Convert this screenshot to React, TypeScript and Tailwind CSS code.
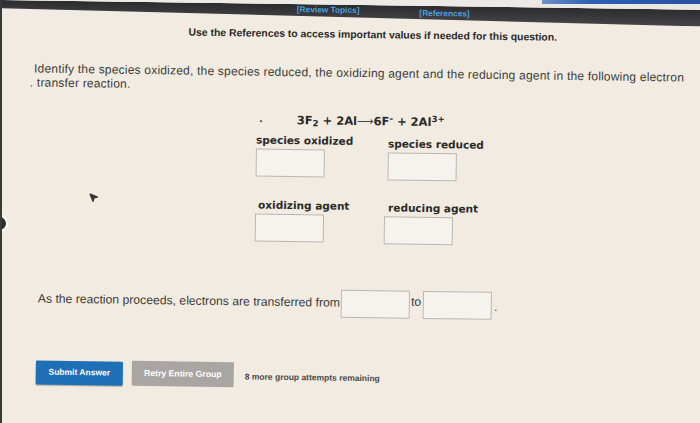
import { MousePointer2 } from 'lucide-react';

const verdana = "font-['DejaVu_Sans','Liberation_Sans',sans-serif]";
const arial = "font-['Liberation_Sans',Arial,sans-serif]";

const intro =
  'Identify the species oxidized, the species reduced, the oxidizing agent and the reducing agent in the following electron';

function AnswerBox({ className = '' }: { className?: string }) {
  return <div className={`h-[28px] w-[69px] border border-[#b9b6b1] bg-[#f6f3ee] ${className}`} />;
}

function Field({ label, className = '' }: { label: string; className?: string }) {
  return (
    <div className={`flex flex-col ${className}`}>
      <span className={`${verdana} text-[10.5px] font-bold leading-[13px] text-[#2b2a28]`}>{label}</span>
      <AnswerBox className="mt-[2px]" />
    </div>
  );
}

export default function App() {
  return (
    <div className="relative h-[423px] w-[700px] overflow-hidden border-l-2 border-[#3a3939] bg-[#f1ebe2] text-[#2f2e2c]">
      {/* strip of the browser chrome showing above the toolbar */}
      <div className="absolute inset-x-0 top-0 h-[12px] bg-[linear-gradient(90deg,#f0ebe4_0%,#ebe8e4_100%)]">
        <div className="ml-[540px] h-[4px] bg-[linear-gradient(90deg,#6f92c9,#2d5fb3_30%,#2653a6)]" />
      </div>

      {/* the photo is taken slightly tilted */}
      <div className="relative w-[712px] origin-top-left rotate-[0.8deg]">
        <div className="flex h-[17px] items-start bg-[linear-gradient(180deg,#2c2b2d,#454447)] pl-[295px] [clip-path:polygon(0_0,100%_0,100%_100%,0_48%)]">
          <span className={`${arial} text-[8.3px] font-bold leading-[10px] text-[#4aa3e0]`}>[Review Topics]</span>
          <span className={`${arial} ml-[60px] mt-[2px] text-[8.3px] font-bold leading-[10px] text-[#4aa3e0]`}>[References]</span>
        </div>

        <p className={`${arial} ml-[187px] mt-[7px] whitespace-nowrap text-[10.4px] font-bold leading-[12px] text-[#2b2a28]`}>
          Use the References to access important values if needed for this question.
        </p>

        <div className={`${arial} ml-[33px] mt-[25px] text-[12px] leading-[14px] tracking-[0.2px] text-[#3d3c39]`}>
          <p className="whitespace-nowrap">
            {intro.split(' ').map((word, i) => (
              <span key={i}>{word} </span>
            ))}
          </p>
          <p className="-ml-[4px] whitespace-nowrap">. transfer reaction.</p>
        </div>

        <div className="ml-[256px] mt-[20px]">
          <div className="flex items-end">
            <span className="mb-[1px] ml-[3px] text-[9px] leading-none text-[#55534f]">•</span>
            <span className={`${verdana} ml-[34px] text-[11.5px] font-bold leading-[14px] text-[#2b2a28]`}>
              3F<sub>2</sub> + 2Al<span className="font-normal text-[#444]">⟶</span>6F<sup>-</sup> + 2Al<sup>3+</sup>
            </span>
          </div>
          <div className="mt-[7px] grid w-[240px] grid-cols-[132px_108px]">
            <Field label="species oxidized" />
            <Field label="species reduced" className="mt-[2px]" />
            <Field label="oxidizing agent" className="mt-[20px] [&>span]:ml-[3px]" />
            <Field label="reducing agent" className="-ml-[3px] mt-[21px] [&>span]:ml-[4px]" />
          </div>
        </div>

        <div className={`${arial} ml-[40px] mt-[46px] flex items-start text-[12.2px] leading-[14px] text-[#3d3c39]`}>
          <span className="mt-[6px]">As the reaction proceeds, electrons are transferred from</span>
          <AnswerBox className="ml-[1px] h-[27px] w-[67px]" />
          <span className="mt-[4px] px-[1px]">to</span>
          <AnswerBox className="ml-[1px] h-[27px] w-[67px]" />
          <span className="ml-[2px] mt-[8px]">.</span>
        </div>

        <div className={`${arial} ml-[39px] mt-[46px] flex items-center`}>
          <button className="h-[24px] w-[87px] rounded-[1px] bg-[#1f6fb6] text-[8.5px] font-bold text-white shadow-[0_1px_1px_rgba(0,0,0,0.3)]">
            Submit Answer
          </button>
          <button className="ml-[9px] h-[25px] w-[102px] rounded-[1px] bg-[#a8a5a2] text-[8.7px] font-bold text-white">
            Retry Entire Group
          </button>
          <span className="ml-[11px] mt-[4px] text-[8.5px] font-bold text-[#4a4946]">8 more group attempts remaining</span>
        </div>
      </div>

      {/* mouse pointer and side handle in the photo */}
      <MousePointer2 className="absolute left-[86px] top-[192px] h-[11px] w-[11px] fill-[#333] text-[#333]" />
      <div className="absolute left-[-11px] top-[215px] h-[17px] w-[17px] rounded-full border-2 border-white bg-[#2e2d2d]" />
    </div>
  );
}
